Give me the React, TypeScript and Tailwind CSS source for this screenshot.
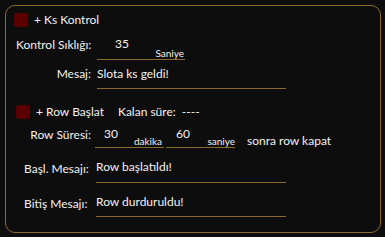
import React from "react";

const font = { fontFamily: 'Lato, "Noto Sans", sans-serif' };

function CheckBox() {
  return <div className="w-[14px] h-[14px] rounded-[3px] bg-[#5a0000] shrink-0" />;
}

export default function App() {
  return (
    <div className="w-[385px] h-[237px] bg-[#0d0d0d] pt-[5px] pl-[5px] text-[12px] leading-[16px] text-[#f2f2f2] whitespace-nowrap" style={font}>
      <div className="w-[376px] h-[228px] border border-[#8c6b2a] rounded-[10px] flex flex-col">
        {/* Ks Kontrol */}
        <div className="flex items-center mt-[7px] ml-[8px] h-[14px]">
          <CheckBox />
          <span className="ml-[6px]">+ Ks Kontrol</span>
        </div>
        {/* Kontrol Sıklığı */}
        <div className="flex mt-[9px] ml-[10px]">
          <div className="w-[75px] pt-[1px]">Kontrol Sıklığı:</div>
          <div className="ml-[6px] w-[88px] h-[24px] border-b border-[#8c6b2a] flex justify-between">
            <span className="pl-[18px]">35</span>
            <span className="self-end text-[10px] leading-[12px] pr-[1px]">Saniye</span>
          </div>
        </div>
        {/* Mesaj */}
        <div className="flex mt-[6px] ml-[10px]">
          <div className="w-[75px] text-right">Mesaj:</div>
          <div className="ml-[6px] w-[189px] h-[23px] border-b border-[#8c6b2a]">Slota ks geldi!</div>
        </div>
        {/* Row Başlat */}
        <div className="flex items-center mt-[16px] ml-[10px] h-[14px]">
          <CheckBox />
          <span className="ml-[6px]">+ Row Başlat</span>
          <span className="ml-[14px]">Kalan süre:</span>
          <span className="ml-[6px]">----</span>
        </div>
        {/* Row Süresi */}
        <div className="flex mt-[7px] ml-[10px]">
          <div className="w-[75px] text-right pt-[1px]">Row Süresi:</div>
          <div className="ml-[4px] w-[69px] h-[22px] border-b border-[#8c6b2a] flex justify-between">
            <span className="pl-[9px]">30</span>
            <span className="self-end text-[10px] leading-[12px] pr-[2px]">dakika</span>
          </div>
          <div className="ml-[2px] w-[69px] h-[22px] border-b border-[#8c6b2a] flex justify-between">
            <span className="pl-[10px]">60</span>
            <span className="self-end text-[10px] leading-[12px]">saniye</span>
          </div>
          <div className="self-end ml-[12px] mb-[-1px]">sonra row kapat</div>
        </div>
        {/* Başl. Mesajı */}
        <div className="flex mt-[11px] ml-[18px]">
          <div className="w-[72px] pt-[2px]">Başl. Mesajı:</div>
          <div className="w-[190px] h-[24px] border-b border-[#8c6b2a]">Row başlatıldı!</div>
        </div>
        {/* Bitiş Mesajı */}
        <div className="flex mt-[11px] ml-[18px]">
          <div className="w-[72px] pt-[2px]">Bitiş Mesajı:</div>
          <div className="w-[190px] h-[23px] border-b border-[#8c6b2a]">Row durduruldu!</div>
        </div>
      </div>
    </div>
  );
}
